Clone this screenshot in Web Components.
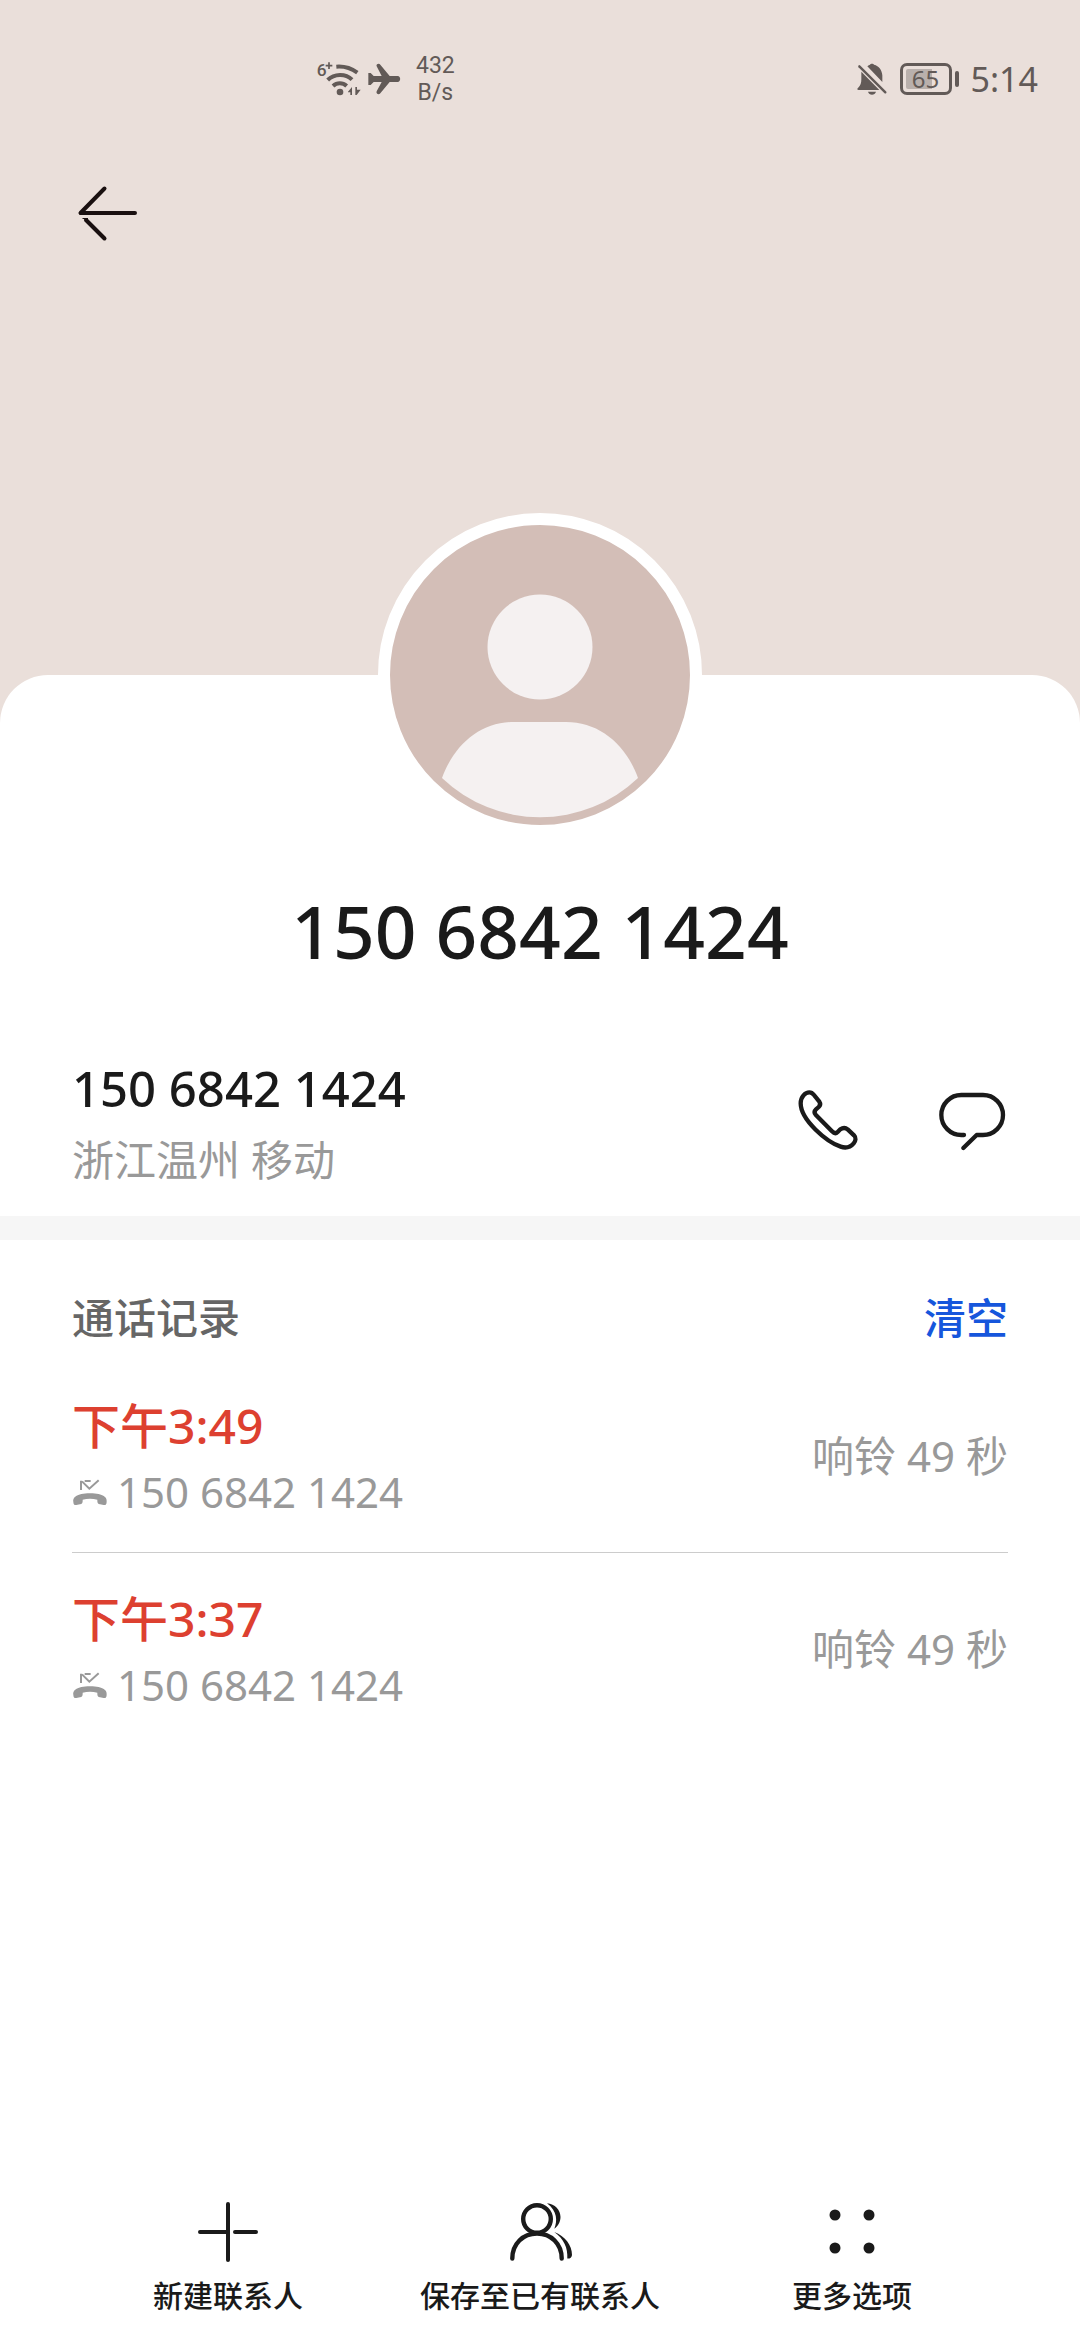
<!DOCTYPE html>
<html lang="zh-CN">
<head>
<meta charset="utf-8">
<meta name="viewport" content="width=device-width, initial-scale=1">
<title>联系人详情</title>
<style>
    body {
        margin: 0;
        background: #ffffff;
        color: #1a1a1a;
        font-family: "Noto Sans", "Noto Sans CJK SC", sans-serif;
    }
</style>
</head>
<body>
<contact-page>
    <status-bar slot="status" time="5:14" battery="65" speed="432" unit="B/s"></status-bar>
    <contact-avatar slot="avatar"></contact-avatar>
    <span slot="name">150 6842 1424</span>
    <phone-entry number="150 6842 1424">浙江温州 移动</phone-entry>
    <call-log heading="通话记录" action="清空">
        <call-record time="下午3:49" number="150 6842 1424">响铃 49 秒</call-record>
        <call-record time="下午3:37" number="150 6842 1424">响铃 49 秒</call-record>
    </call-log>
    <action-bar slot="actions">
        <action-item icon="plus">新建联系人</action-item>
        <action-item icon="people">保存至已有联系人</action-item>
        <action-item icon="more">更多选项</action-item>
    </action-bar>
</contact-page>

<script>
const buttonReset = `
    button {
        display: block;
        margin: 0;
        padding: 0;
        border: 0;
        background: none;
        color: inherit;
        font: inherit;
        cursor: pointer;
    }
    svg { display: block; }
`;

/** Top system bar: network on the left, battery and clock on the right */
class StatusBar extends HTMLElement {
    constructor() {
        super();
        this.attachShadow({ mode: 'open' });
    }

    connectedCallback() {
        const level = parseInt(this.getAttribute('battery')) || 0;

        this.shadowRoot.innerHTML = `
            <style>
                :host {
                    display: flex;
                    justify-content: space-between;
                    align-items: center;
                    height: 157px;
                    padding: 0 42px 0 316px;
                    color: #625a57;
                }
                .group { display: flex; align-items: center; }
                .left { gap: 4px; }
                .right { gap: 12px; }
                svg { display: block; fill: currentColor; }
                .speed {
                    margin-left: 10px;
                    font: 23px/27px Roboto, sans-serif;
                    text-align: center;
                }
                .battery { display: flex; align-items: center; gap: 3px; }
                .cell {
                    box-sizing: border-box;
                    width: 52px;
                    height: 32px;
                    padding: 3px;
                    border: 3px solid currentColor;
                    border-radius: 7px;
                }
                .level {
                    height: 20px;
                    border-radius: 2px;
                    background: linear-gradient(to right, #b9b0ac ${level}%, transparent ${level}%);
                    font-size: 24px;
                    line-height: 20px;
                    text-align: center;
                }
                .tip { width: 4px; height: 16px; border-radius: 2px; background: currentColor; }
                .time { font-size: 34px; line-height: 44px; }
            </style>

            <div class="group left">
                <svg width="46" height="38" viewBox="48 54 138 114" aria-hidden="true">
                    <text x="50" y="103" font-family="Roboto, sans-serif" font-weight="500" font-size="52">6</text>
                    <path d="M77 71h20M87 61v20" stroke="currentColor" stroke-width="5"/>
                    <g fill="none" stroke="currentColor" stroke-width="12">
                        <path d="M109 74C133 72 154 79 172 92"/>
                        <path d="M83 114C103 94 137 94 156 113"/>
                        <path d="M99 132C111 121 128 121 140 132"/>
                    </g>
                    <circle cx="120" cy="150" r="10"/>
                    <path d="M144 149l12-14v24h-5v-8h-7zM166 135h5v8h11l-12 16h-4z"/>
                </svg>
                <svg width="36" height="36" viewBox="198 60 108 108" aria-hidden="true">
                    <path d="M205 96h7l9 9h24L230 76c-3-7 7-11 11-5l28 34h24c10 0 10 18 0 18h-24l-28 34c-5 6-14 1-11-6l15-28h-24l-9 9h-7z"/>
                </svg>
                <div class="speed">
                    <div>${this.getAttribute('speed')}</div>
                    <div>${this.getAttribute('unit')}</div>
                </div>
            </div>

            <div class="group right">
                <svg width="32" height="36" viewBox="48 60 96 108" aria-hidden="true">
                    <path d="M82 76c3-3 6-4 8-5 2-4 10-4 12 0 15 4 24 16 25 32v20zM64 92l54 55H56c-5 0-5-4-2-6 8-7 10-15 10-26zM84 152h24c-3 12-21 12-24 0z"/>
                    <path d="M58 76l78 78" stroke="currentColor" stroke-width="7" stroke-linecap="round"/>
                </svg>
                <div class="battery">
                    <div class="cell"><div class="level">${level}</div></div>
                    <div class="tip"></div>
                </div>
                <div class="time">${this.getAttribute('time')}</div>
            </div>
        `;
    }
}

/** Placeholder portrait with a white ring */
class ContactAvatar extends HTMLElement {
    constructor() {
        super();
        this.attachShadow({ mode: 'open' });
        this.shadowRoot.innerHTML = `
            <style>
                :host {
                    display: block;
                    width: 300px;
                    border: 12px solid #ffffff;
                    border-radius: 50%;
                    background: #d3beb7;
                }
                svg { display: block; width: 100%; }
            </style>
            <svg viewBox="0 0 300 300" fill="#f5f1f1" role="img" aria-label="头像">
                <circle cx="150" cy="122" r="52.5"/>
                <path d="M52 253C64 220 90 197 124 197h52c34 0 60 23 72 56a142 142 0 0 1-196 0z"/>
            </svg>
        `;
    }
}

/** Page frame: tinted header, rounded sheet and bottom actions */
class ContactPage extends HTMLElement {
    constructor() {
        super();
        this.attachShadow({ mode: 'open' });
        this.shadowRoot.innerHTML = `
            <style>
                ${buttonReset}
                :host {
                    display: flex;
                    flex-direction: column;
                    min-height: 100vh;
                    background: #eadfda;
                }
                header {
                    display: flex;
                    flex-direction: column;
                    align-items: flex-start;
                    gap: 20px;
                    min-height: 675px;
                }
                slot[name="status"]::slotted(*) { align-self: stretch; }
                .back { margin-left: 72px; }
                main {
                    flex: 1;
                    display: flex;
                    flex-direction: column;
                    border-radius: 48px 48px 0 0;
                    background: #ffffff;
                }
                .profile {
                    display: flex;
                    flex-direction: column;
                    align-items: center;
                    gap: 46px;
                    margin-top: -162px;
                    padding-bottom: 73px;
                }
                h1 {
                    margin: 0;
                    font-size: 73px;
                    font-weight: 500;
                    line-height: 96px;
                }
                .actions { margin-top: auto; }
            </style>

            <header>
                <slot name="status"></slot>
                <button class="back" type="button" aria-label="返回">
                    <svg width="72" height="72" viewBox="0 0 72 72" fill="none" stroke="#1a1010" stroke-width="4" stroke-linecap="round">
                        <path d="M32.5 11.5L8.5 36H63" stroke-linejoin="round"/>
                        <path d="M14 43L32.5 61.5"/>
                        <path d="M10.5 41.5H16" stroke-width="1" stroke-linecap="butt"/>
                    </svg>
                </button>
            </header>
            <main>
                <div class="profile">
                    <slot name="avatar"></slot>
                    <h1><slot name="name"></slot></h1>
                </div>
                <slot></slot>
                <div class="actions"><slot name="actions"></slot></div>
            </main>
        `;
    }
}

/** Number with its location plus call and message buttons */
class PhoneEntry extends HTMLElement {
    constructor() {
        super();
        this.attachShadow({ mode: 'open' });
    }

    connectedCallback() {
        this.shadowRoot.innerHTML = `
            <style>
                ${buttonReset}
                :host {
                    display: flex;
                    justify-content: space-between;
                    align-items: center;
                    padding: 0 72px 20px;
                    border-bottom: 24px solid #f6f6f6;
                    line-height: 72px;
                }
                .number { font-size: 49px; font-weight: 500; }
                .place { color: #999999; font-size: 42px; }
                .buttons {
                    display: flex;
                    gap: 72px;
                }
                svg {
                    fill: none;
                    stroke: currentColor;
                    stroke-width: 13;
                    stroke-linecap: round;
                    stroke-linejoin: round;
                }
            </style>

            <div>
                <div class="number">${this.getAttribute('number')}</div>
                <div class="place"><slot></slot></div>
            </div>
            <div class="buttons">
                <button type="button" aria-label="呼叫">
                    <svg width="72" height="72" viewBox="36 54 216 216">
                        <path d="M62 100C62 80 76 67 88 67C94 67 98 70 102 75L118 95C122 101 121 106 116 111L107 119C102 124 103 129 107 134L156 184C162 190 168 191 173 186L181 178C188 173 197 173 203 178L222 196C229 203 227 213 221 220C210 233 197 235 182 230C140 216 62 150 62 100Z"/>
                    </svg>
                </button>
                <button type="button" aria-label="发信息">
                    <svg width="72" height="72" viewBox="468 54 216 216">
                        <path d="M552 195H544a60 60 0 0 1 0-120H609a60 60 0 0 1 0 120H590L550 234"/>
                    </svg>
                </button>
            </div>
        `;
    }
}

/** Call history with a clear button */
class CallLog extends HTMLElement {
    constructor() {
        super();
        this.attachShadow({ mode: 'open' });
    }

    connectedCallback() {
        this.shadowRoot.innerHTML = `
            <style>
                ${buttonReset}
                :host { display: block; padding: 42px 72px 0; }
                .head {
                    display: flex;
                    justify-content: space-between;
                    margin-bottom: 6px;
                    font-size: 42px;
                    line-height: 72px;
                }
                h2 { margin: 0; color: #666666; font-size: inherit; font-weight: 500; }
                .clear { color: #1656dc; font-weight: 500; }
                ::slotted(call-record:not(:last-child)) { border-bottom: 1px solid #cccccc; }
            </style>

            <div class="head">
                <h2>${this.getAttribute('heading')}</h2>
                <button class="clear" type="button">${this.getAttribute('action')}</button>
            </div>
            <slot></slot>
        `;

        this.shadowRoot.querySelector('.clear').addEventListener('click', () => {
            this.replaceChildren();
        });
    }
}

/** One missed call */
class CallRecord extends HTMLElement {
    constructor() {
        super();
        this.attachShadow({ mode: 'open' });
    }

    connectedCallback() {
        this.shadowRoot.innerHTML = `
            <style>
                :host {
                    display: flex;
                    justify-content: space-between;
                    padding: 33px 0 27px;
                    color: #999999;
                    font-size: 42px;
                    line-height: 66px;
                }
                .time { color: #dd4030; font-size: 48px; font-weight: 500; }
                .number { display: flex; align-items: center; gap: 9px; }
                .duration { padding-top: 30px; }
                svg { display: block; }
            </style>

            <div>
                <div class="time">${this.getAttribute('time')}</div>
                <div class="number">
                    <svg width="36" height="36" viewBox="36 822 108 108" role="img" aria-label="未接">
                        <path d="M40 905C38 894 48 880 90 880C132 880 142 894 140 905C140 913 137 916 131 915L120 913C114 912 112 909 112 903V899C98 895 82 895 68 899V903C68 909 66 912 60 913L49 915C43 916 40 913 40 905Z" fill="#999999"/>
                        <path d="M63 870V842M74 843H92M66 844L88 866L116 841" fill="none" stroke="#999999" stroke-width="6"/>
                    </svg>
                    ${this.getAttribute('number')}
                </div>
            </div>
            <div class="duration"><slot></slot></div>
        `;
    }
}

/** Bottom toolbar */
class ActionBar extends HTMLElement {
    constructor() {
        super();
        this.attachShadow({ mode: 'open' });
        this.shadowRoot.innerHTML = `
            <style>
                :host {
                    display: grid;
                    grid-template-columns: repeat(3, 1fr);
                    padding: 0 72px 26px;
                }
            </style>
            <slot></slot>
        `;
    }
}

class ActionItem extends HTMLElement {
    static icons = {
        plus: `
            <path d="M36 8V64M8 36H36M43 36H64" fill="none" stroke="currentColor" stroke-width="4" stroke-linecap="round"/>`,
        people: `
            <g fill="none" stroke="currentColor" stroke-width="4.4" stroke-linecap="round">
                <circle cx="33" cy="23" r="13.8"/>
                <path d="M8.3 62.5C8.3 48 19 37.5 33 37.5S57.7 48 57.7 62.5"/>
            </g>
            <path d="M43 7.3C51 8 56.5 14 56.5 21C56.5 26 54 30 50.3 32.8C53.5 25 53.5 15 43 7.3Z"/>
            <path d="M50.3 36C61 40 68 49 68 59C67.8 61.5 66 62.8 63.3 62.6C64 52 60 43 50.3 36Z"/>`,
        more: `
            <circle cx="19" cy="19" r="5.5"/>
            <circle cx="53" cy="19" r="5.5"/>
            <circle cx="19" cy="52" r="5.5"/>
            <circle cx="53" cy="52" r="5.5"/>`
    };

    constructor() {
        super();
        this.attachShadow({ mode: 'open' });
    }

    connectedCallback() {
        this.shadowRoot.innerHTML = `
            <style>
                ${buttonReset}
                :host { display: grid; justify-items: center; }
                button {
                    display: flex;
                    flex-direction: column;
                    align-items: center;
                    gap: 10px;
                    font-size: 30px;
                    font-weight: 500;
                    line-height: 36px;
                    white-space: nowrap;
                }
            </style>
            <button type="button">
                <svg width="72" height="72" viewBox="0 0 72 72" fill="currentColor" aria-hidden="true">
                    ${ActionItem.icons[this.getAttribute('icon')] || ''}
                </svg>
                <span><slot></slot></span>
            </button>
        `;
    }
}

customElements.define('status-bar', StatusBar);
customElements.define('contact-avatar', ContactAvatar);
customElements.define('contact-page', ContactPage);
customElements.define('phone-entry', PhoneEntry);
customElements.define('call-log', CallLog);
customElements.define('call-record', CallRecord);
customElements.define('action-bar', ActionBar);
customElements.define('action-item', ActionItem);
</script>
</body>
</html>
